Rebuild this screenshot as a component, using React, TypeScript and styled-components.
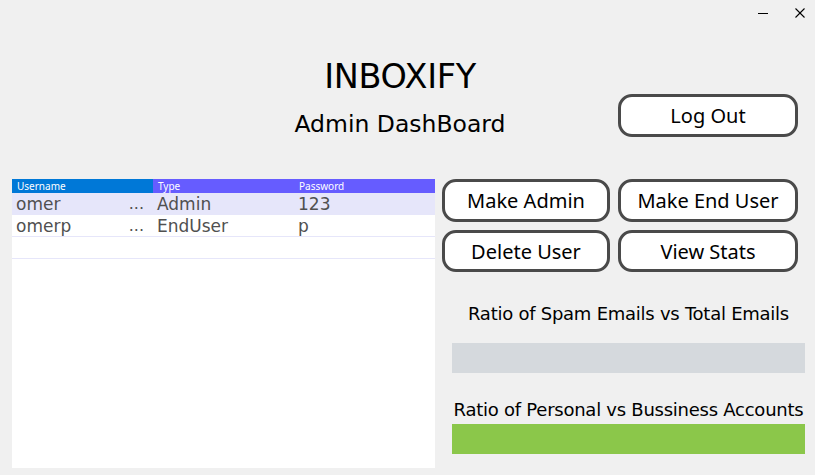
import React from "react";
import styled, { createGlobalStyle } from "styled-components";

const Global = createGlobalStyle`
  html, body { margin: 0; padding: 0; background: #f0f0f0; }
  * { box-sizing: border-box; }
`;

const gothic = `"DejaVu Sans", "Liberation Sans", sans-serif`;
const segoe = `"Noto Sans", "Open Sans", sans-serif`;

const Window = styled.div`
  width: 815px;
  height: 475px;
  background: #f0f0f0;
  display: flex;
  flex-direction: column;
  overflow: hidden;
`;

const TitleBar = styled.div`
  height: 28px;
  display: flex;
  justify-content: flex-end;
  align-items: flex-start;
  gap: 7px;
`;

const WinButton = styled.div`
  width: 30px;
  height: 26px;
  display: flex;
  align-items: center;
  justify-content: center;
`;

const Header = styled.div`
  display: grid;
  grid-template-columns: 200px 400px 1fr;
  height: 150px;
`;

const TitleBlock = styled.div`
  grid-column: 2;
  display: flex;
  flex-direction: column;
  align-items: center;
  font-family: ${gothic};
  color: #000;
`;

const AppTitle = styled.div`
  margin-top: 30px;
  font-size: 33.5px;
  line-height: 38px;
  letter-spacing: -0.3px;
`;

const SubTitle = styled.div`
  margin-top: 14px;
  font-size: 23.5px;
  line-height: 28px;
`;

const HeaderSide = styled.div`
  grid-column: 3;
  padding-left: 18px;
  padding-top: 66px;
`;

const PillButton = styled.button<{ $w: number; $h?: number }>`
  width: ${(p) => p.$w}px;
  height: ${(p) => p.$h ?? 43}px;
  background: #ffffff;
  border: 3px solid #4a4a4a;
  border-radius: 14px;
  font-family: ${segoe};
  font-size: 20px;
  color: #000;
  padding: 0;
  display: flex;
  align-items: center;
  justify-content: center;
  cursor: pointer;
`;

const Main = styled.div`
  display: grid;
  grid-template-columns: 423px 1fr;
  column-gap: 7px;
  padding-left: 12px;
  flex: 1;
  padding-bottom: 7px;
`;

const Table = styled.div`
  background: #ffffff;
  display: flex;
  flex-direction: column;
  margin-top: 1px;
`;

const HeadRow = styled.div`
  display: grid;
  grid-template-columns: 141px 141px 141px;
  height: 14px;
`;

const HeadCell = styled.div<{ $bg: string }>`
  background: ${(p) => p.$bg};
  color: #fff;
  font-family: ${segoe};
  font-size: 10px;
  line-height: 14px;
  padding-left: 5px;
`;

const Row = styled.div<{ $selected?: boolean }>`
  display: grid;
  grid-template-columns: 141px 141px 141px;
  height: 22px;
  background: ${(p) => (p.$selected ? "#e6e6fa" : "#ffffff")};
  border-bottom: 1px solid #e6e6fa;
  font-family: ${gothic};
  font-size: 17px;
  color: #505050;
  line-height: 22px;
`;

const Cell = styled.div`
  padding-left: 4px;
  display: flex;
  justify-content: space-between;
  padding-right: 9px;
  white-space: nowrap;
`;

const Ellipsis = styled.span`
  font-size: 16px;
`;

const Side = styled.div`
  display: flex;
  flex-direction: column;
`;

const ButtonGrid = styled.div`
  display: grid;
  grid-template-columns: 168px 180px;
  column-gap: 8px;
  row-gap: 8px;
  margin-top: 1px;
`;

const StatLabel = styled.div<{ $top: number }>`
  margin-top: ${(p) => p.$top}px;
  font-family: ${gothic};
  font-size: 18px;
  line-height: 22px;
  color: #000;
  text-align: center;
  white-space: nowrap;
  letter-spacing: -0.25px;
`;

const Bar = styled.div<{ $color: string; $top: number }>`
  margin-top: ${(p) => p.$top}px;
  margin-left: 10px;
  width: 353px;
  height: 30px;
  background: ${(p) => p.$color};
`;

const rows = [
  { u: "omer", t: "Admin", p: "123", sel: true },
  { u: "omerp", t: "EndUser", p: "p", sel: false },
  { u: "", t: "", p: "", sel: false },
];

export default function App() {
  return (
    <>
      <Global />
      <Window>
        <TitleBar>
          <WinButton>
            <svg width="12" height="12" viewBox="0 0 12 12">
              <line x1="1" y1="6.5" x2="11" y2="6.5" stroke="#000" strokeWidth="1" />
            </svg>
          </WinButton>
          <WinButton>
            <svg width="12" height="12" viewBox="0 0 12 12">
              <line x1="1.5" y1="1.5" x2="10.5" y2="10.5" stroke="#000" strokeWidth="1.1" />
              <line x1="10.5" y1="1.5" x2="1.5" y2="10.5" stroke="#000" strokeWidth="1.1" />
            </svg>
          </WinButton>
        </TitleBar>
        <Header>
          <TitleBlock>
            <AppTitle>INBOXIFY</AppTitle>
            <SubTitle>Admin DashBoard</SubTitle>
          </TitleBlock>
          <HeaderSide>
            <PillButton $w={180} $h={43}>Log Out</PillButton>
          </HeaderSide>
        </Header>
        <Main>
          <Table>
            <HeadRow>
              <HeadCell $bg="#0078d7">Username</HeadCell>
              <HeadCell $bg="#665cff">Type</HeadCell>
              <HeadCell $bg="#665cff">Password</HeadCell>
            </HeadRow>
            {rows.map((r, i) => (
              <Row key={i} $selected={r.sel}>
                <Cell>
                  <span>{r.u}</span>
                  {r.u && <Ellipsis>...</Ellipsis>}
                </Cell>
                <Cell>{r.t}</Cell>
                <Cell>{r.p}</Cell>
              </Row>
            ))}
          </Table>
          <Side>
            <ButtonGrid>
              <PillButton $w={168}>Make Admin</PillButton>
              <PillButton $w={180}>Make End User</PillButton>
              <PillButton $w={168} $h={42}>Delete User</PillButton>
              <PillButton $w={180} $h={42}>View Stats</PillButton>
            </ButtonGrid>
            <StatLabel $top={31}>Ratio of Spam Emails vs Total Emails</StatLabel>
            <Bar $color="#d5d9dd" $top={18} />
            <StatLabel $top={26}>Ratio of Personal vs Bussiness Accounts</StatLabel>
            <Bar $color="#8bc74a" $top={3} />
          </Side>
        </Main>
      </Window>
    </>
  );
}
